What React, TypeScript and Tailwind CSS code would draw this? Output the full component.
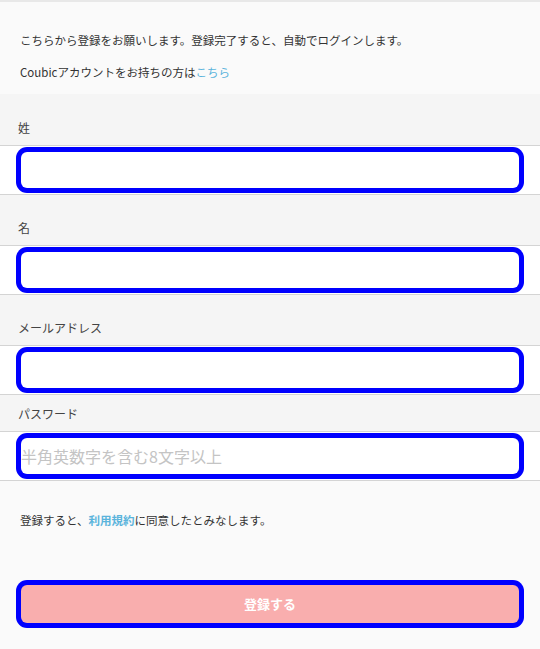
export default function App() {
  const fields = [
    { label: '姓', type: 'text', placeholder: '', compact: false },
    { label: '名', type: 'text', placeholder: '', compact: false },
    { label: 'メールアドレス', type: 'email', placeholder: '', compact: false },
    { label: 'パスワード', type: 'password', placeholder: '半角英数字を含む8文字以上', compact: true },
  ]

  return (
    <div className="min-h-[649px] bg-[#fafafa] text-[#333] font-['Noto_Sans_CJK_JP','Noto_Sans',sans-serif]">
      <div className="border-t-2 border-[#e8e8e8] bg-[#fafafa] h-[94px] px-5 pt-[28px] text-[11.5px] leading-[20px]">
        <p>こちらから登録をお願いします。登録完了すると、自動でログインします。</p>
        <p className="mt-3">
          Coubicアカウントをお持ちの方は<a href="#" className="text-[#5ab4dc]">こちら</a>
        </p>
      </div>

      <form className="bg-[#f5f5f5]">
        {fields.map((f, i) => (
          <div key={f.label}>
            <div
              className={
                f.compact
                  ? 'px-[18px] pt-[11px] pb-[9px] text-[12px] leading-[16px] text-[#444]'
                  : i === 0
                    ? 'px-[18px] pt-[26px] pb-[9px] text-[12px] leading-[16px] text-[#444]'
                    : 'px-[18px] pt-[25px] pb-[9px] text-[12px] leading-[16px] text-[#444]'
              }
            >
              {f.label}
            </div>
            <div className="bg-white border-y border-[#d4d4d4] px-[21px] py-[6px]">
              <input
                type={f.type}
                placeholder={f.placeholder}
                className="block w-full h-[36px] rounded-[6px] bg-white text-[16px] px-0 outline-none shadow-[0_0_0_5px_#0000ff] placeholder:text-[#c4c4c4]"
              />
            </div>
          </div>
        ))}
      </form>

      <div className="bg-[#fafafa] px-5 pt-[29px] pb-[26px]">
        <p className="text-[11.5px] leading-[20px]">
          登録すると、<a href="#" className="text-[#5ab4dc] font-bold">利用規約</a>に同意したとみなします。
        </p>
        <div className="mt-[55px] px-[1px]">
          <button
            type="button"
            className="block w-full h-[38px] rounded-[6px] bg-[#f9aeae] text-white text-[13px] font-bold shadow-[0_0_0_5px_#0000ff]"
          >
            登録する
          </button>
        </div>
      </div>
    </div>
  )
}
